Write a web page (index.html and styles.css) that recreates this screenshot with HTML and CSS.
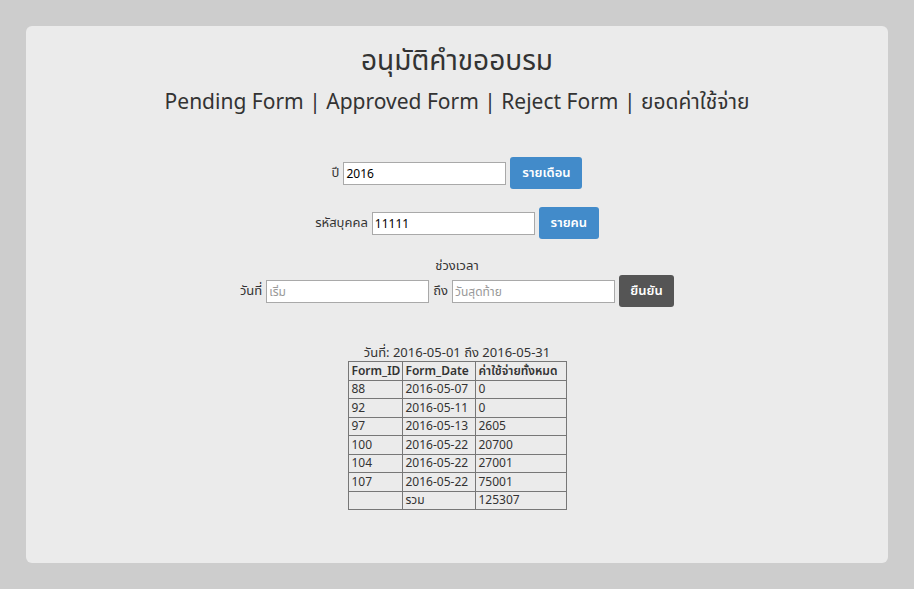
FILE: index.html
```html
<!DOCTYPE html>
<html lang="th">
<head>
<meta charset="utf-8">
<title>อนุมัติคำขออบรม</title>
<link rel="stylesheet" href="styles.css">
</head>
<body>
<div class="card">
  <h1 class="title">อนุมัติคำขออบรม</h1>
  <h2 class="nav">Pending Form | Approved Form | Reject Form | ยอดค่าใช้จ่าย</h2>

  <div class="row row-year">
    <label class="lbl">ปี</label>
    <input class="field" type="text" value="2016">
    <button class="btn btn-blue btn-month">รายเดือน</button>
  </div>

  <div class="row row-person">
    <label class="lbl">รหัสบุคคล</label>
    <input class="field" type="text" value="11111">
    <button class="btn btn-blue btn-person">รายคน</button>
  </div>

  <div class="range-title">ช่วงเวลา</div>
  <div class="row row-range">
    <label class="lbl">วันที่</label>
    <input class="field" type="text" placeholder="เริ่ม">
    <label class="lbl">ถึง</label>
    <input class="field" type="text" placeholder="วันสุดท้าย">
    <button class="btn btn-dark btn-ok">ยืนยัน</button>
  </div>

  <div class="report">
    <div class="caption">วันที่: 2016-05-01 ถึง 2016-05-31</div>
    <table class="data">
      <tr><th class="c1">Form_ID</th><th class="c2">Form_Date</th><th class="c3">ค่าใช้จ่ายทั้งหมด</th></tr>
      <tr><td>88</td><td>2016-05-07</td><td>0</td></tr>
      <tr><td>92</td><td>2016-05-11</td><td>0</td></tr>
      <tr><td>97</td><td>2016-05-13</td><td>2605</td></tr>
      <tr><td>100</td><td>2016-05-22</td><td>20700</td></tr>
      <tr><td>104</td><td>2016-05-22</td><td>27001</td></tr>
      <tr><td>107</td><td>2016-05-22</td><td>75001</td></tr>
      <tr><td></td><td>รวม</td><td>125307</td></tr>
    </table>
  </div>
</div>
</body>
</html>
```

FILE: styles.css
```css
html, body {
  margin: 0;
  padding: 0;
}
body {
  background: #cdcdcd;
  font-family: "Noto Sans", "Noto Sans Thai", "Noto Sans Thai UI", "Loma", "Garuda", "Noto Sans CJK SC", sans-serif;
  color: #333;
  padding: 26px;
  height: 589px;
  box-sizing: border-box;
}
.card {
  background: #ebebeb;
  border-radius: 6px;
  height: 537px;
  box-sizing: border-box;
  padding-top: 14px;
  display: flex;
  flex-direction: column;
  align-items: center;
}
.title {
  margin: 0;
  font-size: 28px;
  font-weight: 400;
  line-height: 38px;
  color: #333;
}
.nav {
  margin: 8px 0 0;
  font-size: 21px;
  font-weight: 400;
  line-height: 30px;
  color: #333;
}
.row {
  display: flex;
  align-items: center;
  justify-content: center;
  gap: 4px;
  font-size: 13px;
}
.row-year { margin-top: 41px; }
.row-person { margin-top: 18px; }
.range-title {
  margin-top: 16px;
  font-size: 13px;
  line-height: 20px;
}
.row-range { margin-top: 0; }
.lbl {
  font-size: 13px;
}
.field {
  width: 163px;
  height: 23px;
  box-sizing: border-box;
  border: 1px solid #a9a9a9;
  background: #fff;
  font-family: inherit;
  font-size: 12px;
  padding: 0 2px;
  margin: 0;
  color: #000;
}
.field::placeholder {
  color: #999;
}
.btn {
  height: 32px;
  border: none;
  border-radius: 3px;
  color: #fff;
  font-family: inherit;
  font-size: 13px;
  font-weight: 600;
  padding: 0;
  margin: 0;
  white-space: nowrap;
}
.btn-blue { background: #428bca; }
.btn-dark { background: #555; }
.btn-month { width: 72px; }
.btn-person { width: 60px; }
.btn-ok { width: 55px; }
.report {
  margin-top: 36px;
  display: flex;
  flex-direction: column;
  align-items: center;
}
.caption {
  font-size: 13px;
  line-height: 18px;
}
.data {
  border-collapse: collapse;
  table-layout: fixed;
  width: 218px;
  font-size: 12px;
  border: 1px solid #555;
}
.data th, .data td {
  border: 1px solid #777;
  padding: 0 3px;
  height: 17.5px;
  text-align: left;
  white-space: nowrap;
  overflow: hidden;
  line-height: 16px;
}
.data th { font-weight: 600; }
.c1 { width: 47px; }
.c2 { width: 66px; }
.c3 { width: 84px; }
```
